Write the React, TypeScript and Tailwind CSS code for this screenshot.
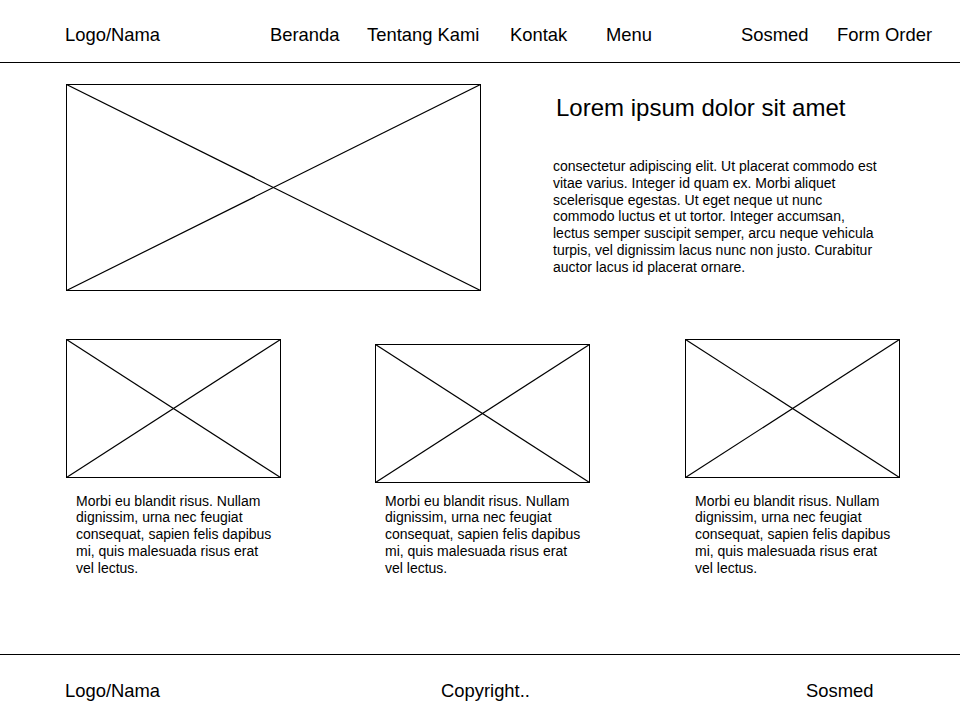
import React from "react";

function Placeholder({ w, h }: { w: number; h: number }) {
  return (
    <svg width={w} height={h} viewBox={`0 0 ${w} ${h}`} className="block shrink-0">
      <rect x={0.5} y={0.5} width={w - 1} height={h - 1} fill="white" stroke="#000" strokeWidth={1} />
      <line x1={0.5} y1={0.5} x2={w - 0.5} y2={h - 0.5} stroke="#000" strokeWidth={1.2} />
      <line x1={0.5} y1={h - 0.5} x2={w - 0.5} y2={0.5} stroke="#000" strokeWidth={1.2} />
    </svg>
  );
}

const cardText =
  "Morbi eu blandit risus. Nullam dignissim, urna nec feugiat consequat, sapien felis dapibus mi, quis malesuada risus erat vel lectus.";

function Card({ offset }: { offset?: boolean }) {
  return (
    <div className="w-[215px] shrink-0">
      <div className={offset ? "h-[144px] pt-[5px]" : "h-[144px]"}>
        <Placeholder w={215} h={139} />
      </div>
      <p className="mt-[9.5px] pl-[10px] w-[210px] text-[14px] leading-[16.8px] text-black">{cardText}</p>
    </div>
  );
}

export default function App() {
  return (
    <div className="w-[960px] h-[720px] bg-white text-black font-['Liberation_Sans',Arial,sans-serif] overflow-hidden">
      <header className="h-[63px] border-b border-black flex items-start pt-[24px] pl-[65px] text-[18.4px] leading-[21px]">
        <div className="w-[205px]">Logo/Nama</div>
        <div className="w-[97px]">Beranda</div>
        <div className="w-[143px]">Tentang Kami</div>
        <div className="w-[96px]">Kontak</div>
        <div className="w-[135px]">Menu</div>
        <div className="w-[96px]">Sosmed</div>
        <div>Form Order</div>
      </header>

      <main className="h-[591px] pt-[21px] pl-[66px]">
        <section className="flex items-start">
          <Placeholder w={415} h={207} />
          <div className="ml-[72px]">
            <h1 className="pt-[10px] ml-[3px] text-[24px] leading-[28px] font-normal">Lorem ipsum dolor sit amet</h1>
            <p className="mt-[36px] w-[330px] text-[14px] leading-[16.8px]">
              consectetur adipiscing elit. Ut placerat commodo est vitae varius. Integer id quam ex. Morbi aliquet
              scelerisque egestas. Ut eget neque ut nunc commodo luctus et ut tortor. Integer accumsan, lectus semper
              suscipit semper, arcu neque vehicula turpis, vel dignissim lacus nunc non justo. Curabitur auctor lacus id
              placerat ornare.
            </p>
          </div>
        </section>

        <section className="mt-[48px] flex items-start">
          <Card />
          <div className="ml-[94px]">
            <Card offset />
          </div>
          <div className="ml-[95px]">
            <Card />
          </div>
        </section>
      </main>

      <footer className="h-[66px] border-t border-black flex items-start pt-[25px] pl-[65px] text-[18.4px] leading-[21px]">
        <div className="w-[376px]">Logo/Nama</div>
        <div className="w-[365px]">Copyright..</div>
        <div>Sosmed</div>
      </footer>
    </div>
  );
}
